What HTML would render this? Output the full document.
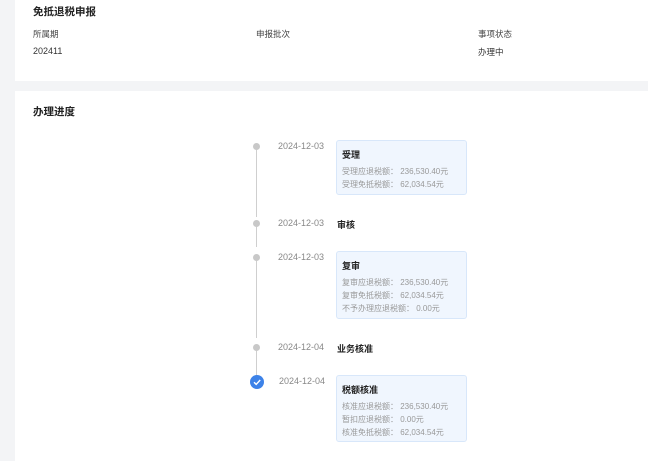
<html><head><style>
body{margin:0;width:648px;height:461px;background:#f3f4f6;font-family:"Liberation Sans","Noto Sans CJK SC",sans-serif;position:relative;overflow:hidden;color:#222}
.a{position:absolute;white-space:nowrap}
.card{position:absolute;left:15px;right:0;background:#fff}
.dot{position:absolute;width:7px;height:7px;border-radius:50%;background:#c8c8c8}
.ln{position:absolute;left:256px;width:1px;background:#cfcfcf}
.d{position:absolute;font-size:9px;color:#888;width:60px;text-align:right}
.box{position:absolute;left:336px;width:131px;background:#f0f6fe;border:1px solid #d8e7fa;border-radius:3px;box-sizing:border-box}
.box b{position:absolute;left:5px;font-size:9px;color:#222}
.box span{position:absolute;left:5px;font-size:8px;color:#999;white-space:nowrap}
.s{font-size:9px;font-weight:bold}
</style></head><body>
<div class="card" style="top:0;height:81px"></div>
<div class="card" style="top:91px;height:370px"></div>
<div class="a" style="left:33px;top:4px;font-size:10.5px;font-weight:bold">免抵退税申报</div>
<div class="a" style="left:33px;top:28px;font-size:8.5px;color:#444">所属期</div>
<div class="a" style="left:256px;top:28px;font-size:8.5px;color:#444">申报批次</div>
<div class="a" style="left:478px;top:28px;font-size:8.5px;color:#444">事项状态</div>
<div class="a" style="left:33px;top:46px;font-size:9px;color:#333">202411</div>
<div class="a" style="left:478px;top:46px;font-size:8.5px;color:#333">办理中</div>
<div class="a" style="left:33px;top:104px;font-size:10.5px;font-weight:bold">办理进度</div>

<div class="ln" style="top:150px;height:67px"></div>
<div class="ln" style="top:227px;height:20px"></div>
<div class="ln" style="top:261px;height:77px"></div>
<div class="ln" style="top:351px;height:25px"></div>
<div class="dot" style="left:253px;top:143px"></div>
<div class="dot" style="left:253px;top:220px"></div>
<div class="dot" style="left:253px;top:254px"></div>
<div class="dot" style="left:253px;top:344px"></div>
<div class="a" style="left:250px;top:375px;width:14px;height:14px;border-radius:50%;background:#3d82e8"></div>
<svg class="a" style="left:250px;top:375px" width="14" height="14"><path d="M4 7.2l2.2 2.2L10.2 5" stroke="#fff" stroke-width="1.4" fill="none"/></svg>

<div class="d" style="left:264px;top:141px">2024-12-03</div>
<div class="d" style="left:264px;top:218px">2024-12-03</div>
<div class="d" style="left:264px;top:252px">2024-12-03</div>
<div class="d" style="left:264px;top:342px">2024-12-04</div>
<div class="d" style="left:265px;top:376px">2024-12-04</div>
<div class="a s" style="left:337px;top:218px">审核</div>
<div class="a s" style="left:337px;top:342px">业务核准</div>

<div class="box" style="top:140px;height:55px"><b style="top:7px">受理</b><span style="top:25px">受理应退税额： 236,530.40元</span><span style="top:38px">受理免抵税额： 62,034.54元</span></div>
<div class="box" style="top:251px;height:68px"><b style="top:7px">复审</b><span style="top:25px">复审应退税额： 236,530.40元</span><span style="top:38px">复审免抵税额： 62,034.54元</span><span style="top:51px">不予办理应退税额： 0.00元</span></div>
<div class="box" style="top:375px;height:67px"><b style="top:7px">税额核准</b><span style="top:25px">核准应退税额： 236,530.40元</span><span style="top:38px">暂扣应退税额： 0.00元</span><span style="top:51px">核准免抵税额： 62,034.54元</span></div>
</body></html>
